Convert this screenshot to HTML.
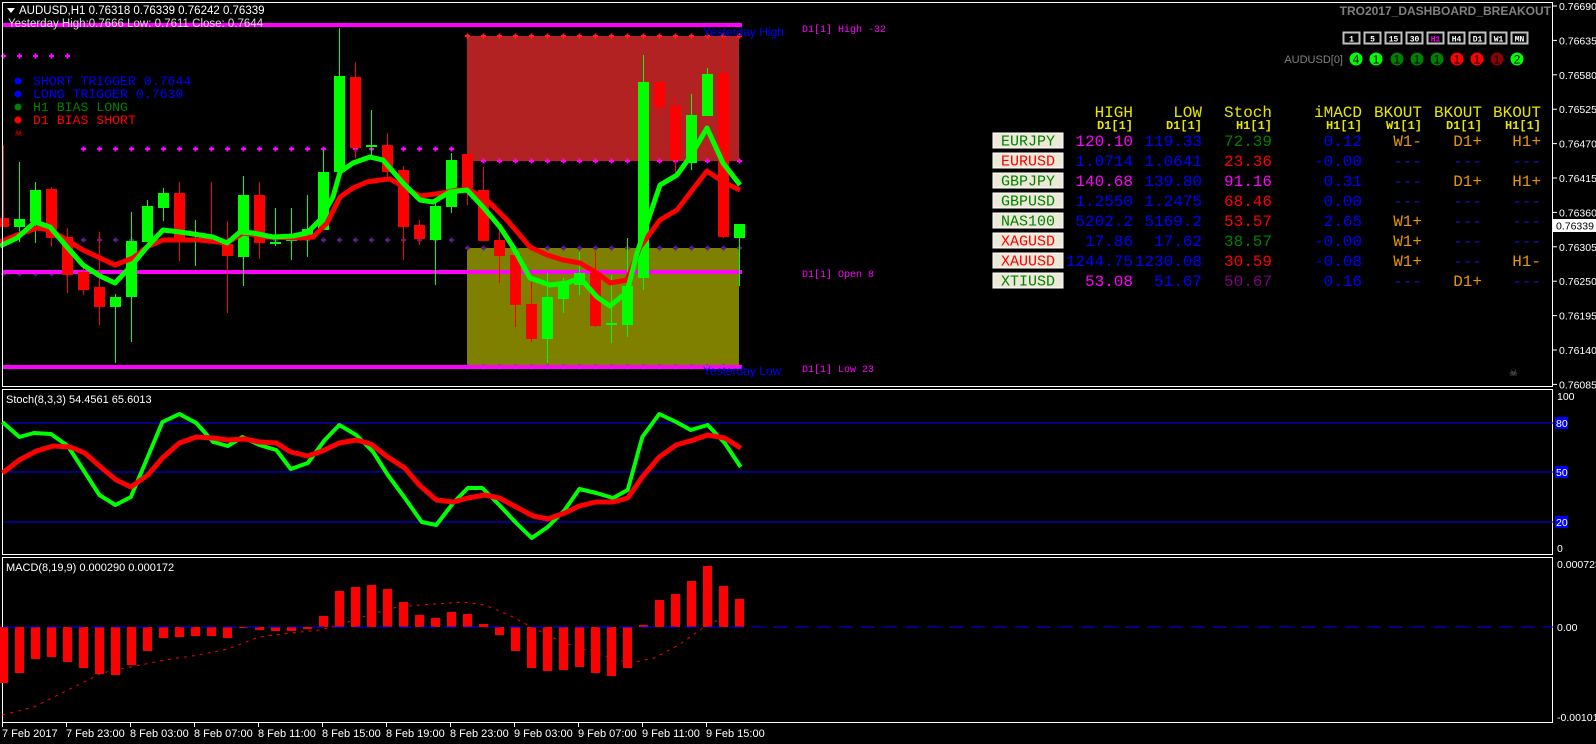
<!DOCTYPE html>
<html><head><meta charset="utf-8">
<style>
html,body{margin:0;padding:0;background:#000;width:1596px;height:744px;overflow:hidden}
svg{display:block}
.s{font-family:"Liberation Sans",sans-serif}
.m{font-family:"Liberation Mono",monospace}
</style></head>
<body>
<svg id="c" width="1596" height="744" viewBox="0 0 1596 744" xmlns="http://www.w3.org/2000/svg">
<rect width="1596" height="744" fill="#000"/>
<!-- boxes -->
<rect x="467" y="36" width="272" height="125" fill="#b22222"/>
<rect x="467" y="248" width="272" height="119" fill="#808000"/>
<g id="dots"></g>
<!-- magenta lines -->
<rect x="2" y="23" width="740" height="4" fill="#ff00ff"/>
<rect x="2" y="270" width="740" height="4" fill="#ff00ff"/>
<rect x="2" y="365" width="740" height="4" fill="#ff00ff"/>
<g id="cand"></g>
<g id="ma"></g>
<!-- panel borders -->
<rect x="2.5" y="2.5" width="1550" height="384" fill="none" stroke="#fff"/>
<rect x="2.5" y="389.5" width="1550" height="165" fill="none" stroke="#fff"/>
<rect x="2.5" y="557.5" width="1550" height="165" fill="none" stroke="#fff"/>
<!-- header text -->
<polygon points="7,8 15,8 11,13" fill="#fff"/>
<text x="19" y="14" class="s" font-size="11.5" fill="#fff">AUDUSD,H1  0.76318 0.76339 0.76242 0.76339</text>
<text x="8" y="27" class="s" font-size="11.5" fill="#ddd">Yesterday High:0.7666   Low: 0.7611   Close: 0.7644</text>
<!-- legend -->
<circle cx="18" cy="81" r="3.5" fill="#0000ff"/><circle cx="18" cy="94" r="3.5" fill="#0000ff"/>
<circle cx="18" cy="107" r="3.5" fill="#008000"/><circle cx="18" cy="120" r="3.5" fill="#ff0000"/>
<g class="m" font-size="13.2">
<text x="33" y="85" fill="#0000ff">SHORT TRIGGER 0.7644</text>
<text x="33" y="98" fill="#0000ff">LONG TRIGGER  0.7630</text>
<text x="33" y="111" fill="#008000">H1 BIAS LONG</text>
<text x="33" y="124" fill="#ff0000">D1 BIAS SHORT</text>
</g>
<text x="14" y="136" font-size="10" fill="#f00" class="s">☠</text>
<!-- chart labels -->
<text x="703" y="36" class="s" font-size="12" fill="#0000ff">Yesterday High</text>
<text x="703" y="375" class="s" font-size="12" fill="#0000ff">Yesterday Low</text>
<g class="m" font-size="10" fill="#ff00ff">
<text x="802" y="32">D1[1] High  -32</text>
<text x="802" y="277">D1[1] Open 8</text>
<text x="802" y="372">D1[1] Low  23</text>
</g>
<!-- top right -->
<text x="1551" y="15" text-anchor="end" class="s" font-size="12" font-weight="bold" fill="#808080">TRO2017_DASHBOARD_BREAKOUT</text>
<g id="tf"></g>
<text x="1343" y="63" text-anchor="end" class="s" font-size="11" fill="#808080">AUDUSD[0]</text>
<!-- table -->
<g class="m" font-size="16" text-anchor="end" fill="#e6e600">
<text x="1133" y="117">HIGH</text><text x="1202" y="117">LOW</text><text x="1272" y="117">Stoch</text>
<text x="1362" y="117">iMACD</text><text x="1422" y="117">BKOUT</text><text x="1482" y="117">BKOUT</text><text x="1541" y="117">BKOUT</text>
</g>
<g class="m" font-size="12" font-weight="bold" text-anchor="end" fill="#e6e600">
<text x="1133" y="129">D1[1]</text><text x="1202" y="129">D1[1]</text><text x="1272" y="129">H1[1]</text>
<text x="1362" y="129">H1[1]</text><text x="1422" y="129">W1[1]</text><text x="1482" y="129">D1[1]</text><text x="1541" y="129">H1[1]</text>
</g>
<g id="tbl"></g>
<!-- right axis -->
<g id="ax" class="s" font-size="10.5" fill="#fff"></g>
<rect x="1553" y="219" width="43" height="13" fill="#fff"/>
<text x="1556" y="229.5" class="s" font-size="10.5" fill="#000">0.76339</text>
<text x="1509" y="376" class="s" font-size="10" fill="#777">☠</text>
<!-- stoch -->
<text x="6" y="403" class="s" font-size="11" fill="#fff">Stoch(8,3,3) 54.4561 65.6013</text>
<line x1="3" y1="423" x2="1553" y2="423" stroke="#0000ff"/>
<line x1="3" y1="472" x2="1553" y2="472" stroke="#0000ff"/>
<line x1="3" y1="522" x2="1553" y2="522" stroke="#0000ff"/>
<g class="s" font-size="10.5" fill="#fff">
<text x="1557" y="400">100</text>
<rect x="1555" y="417" width="13" height="12" fill="#0000ff"/><text x="1556" y="427">80</text>
<rect x="1555" y="466" width="13" height="12" fill="#0000ff"/><text x="1556" y="476">50</text>
<rect x="1555" y="516" width="13" height="12" fill="#0000ff"/><text x="1556" y="526">20</text>
<text x="1557" y="552">0</text>
<text x="1557" y="568">0.000723</text>
<text x="1557" y="631">0.00</text>
<text x="1557" y="721">-0.001019</text>
</g>
<g id="st"></g>
<!-- macd -->
<text x="6" y="571" class="s" font-size="11" fill="#fff">MACD(8,19,9) 0.000290 0.000172</text>
<g id="mc"></g>
<line x1="3" y1="627" x2="1553" y2="627" stroke="#0000ff" stroke-dasharray="14,8"/>
<!-- time axis -->
<g class="s" font-size="11" fill="#fff">
<text x="2" y="737">7 Feb 2017</text><text x="66" y="737">7 Feb 23:00</text><text x="130" y="737">8 Feb 03:00</text>
<text x="194" y="737">8 Feb 07:00</text><text x="258" y="737">8 Feb 11:00</text><text x="322" y="737">8 Feb 15:00</text>
<text x="386" y="737">8 Feb 19:00</text><text x="450" y="737">8 Feb 23:00</text><text x="514" y="737">9 Feb 03:00</text>
<text x="578" y="737">9 Feb 07:00</text><text x="642" y="737">9 Feb 11:00</text><text x="706" y="737">9 Feb 15:00</text>
</g>
<g id="tk"></g>
</svg>
<script>
var NS="http://www.w3.org/2000/svg";
function el(p,t,a,txt){var e=document.createElementNS(NS,t);for(var k in a)e.setAttribute(k,a[k]);if(txt!==undefined)e.textContent=txt;document.getElementById(p).appendChild(e);return e;}
// candles: [color, bodyTop, bodyBot, wickTop, wickBot]
var C=[["r",218,227,145,227],["g",219,227,162,242],["g",190,222,182,243],["r",189,238,187,247],["r",237,275,228,293],
["r",272,290,267,295],["r",287,307,232,325],["g",297,307,294,363],["g",241,297,212,342],["g",206,242,200,242],
["g",193,208,188,221],["r",193,238,182,261],["g",238,240,220,266],["r",239,241,182,241],["r",244,256,221,313],
["g",195,257,176,286],["r",195,243,182,259],["g",242,244,208,246],["g",239,241,208,260],["g",229,238,195,257],
["g",172,230,150,230],["g",76,172,28,172],["r",77,148,62,158],["g",145,147,110,160],["r",145,172,133,177],
["r",170,227,166,260],["r",225,239,220,245],["g",206,240,200,285],["g",160,207,153,213],["r",154,188,154,205],
["r",190,241,167,241],["r",240,256,227,283],["r",255,305,255,327],["r",304,339,282,342],["g",297,339,273,363],
["g",283,299,278,313],["g",273,285,252,295],["r",273,326,252,327],["g",323,325,275,343],["g",286,325,238,337],
["g",82,278,55,290],["r",82,107,82,115],["r",106,160,95,176],["g",115,163,94,170],["g",74,116,68,116],
["r",73,237,33,238],["g",224,238,224,286]];
C.forEach(function(c,i){var x=3.5+16*i,col=c[0]=="g"?"#00ff00":"#ff0000";
el("cand","line",{x1:x,y1:c[3],x2:x,y2:c[4],stroke:col,"stroke-width":1});
var h=Math.max(c[2]-c[1],2);el("cand","rect",{x:x-5.5,y:c[1],width:11,height:h,fill:col});});
// dots
function dots(y,x0,x1,col){for(var x=x0;x<=x1;x+=16){el("dots","path",{d:"M"+(x-2.5)+" "+y+"h5M"+x+" "+(y-2.5)+"v5",stroke:col,"stroke-width":2});}}
dots(56,3.5,67.5,"#ff00ff");dots(149,83.5,451.5,"#ff00ff");dots(161,467.5,739.5,"#ff00ff");dots(36,467.5,739.5,"#ff2020");
dots(240,83.5,451.5,"#5b1c8c");dots(274,3.5,67.5,"#5b1c8c");dots(248,467.5,739.5,"#5b1c8c");dots(367,467.5,739.5,"#2020ff");
function pl(g,pts,col,w,extra){var d=pts.map(function(p,i){return (i?"L":"M")+p[0]+" "+p[1]}).join("");var a={d:d,fill:"none",stroke:col,"stroke-width":w,"stroke-linejoin":"round"};for(var k in extra)a[k]=extra[k];el(g,"path",a);}
// MAs
var red=[[0,242],[17,235],[37,228],[50,230],[67,240],[83,250],[100,258],[115,265],[133,258],[147,247],[163,240],[200,240],[227,243],[243,233],[267,237],[300,238],[313,237],[327,223],[340,197],[353,188],[367,182],[380,180],[390,179],[420,196],[443,193],[457,190],[470,190],[490,203],[507,220],[530,247],[547,255],[563,260],[580,263],[597,273],[610,283],[627,280],[640,247],[660,220],[677,210],[690,193],[707,171],[723,182],[740,190]];
var grn=[[0,246],[17,238],[35,222],[50,227],[67,247],[83,265],[100,276],[115,283],[132,265],[147,247],[163,230],[180,232],[200,235],[213,237],[227,243],[240,232],[253,233],[273,237],[293,236],[307,233],[320,220],[333,197],[340,172],[353,163],[370,157],[383,160],[403,183],[420,200],[433,202],[450,192],[467,190],[483,207],[500,227],[513,247],[530,278],[550,285],[567,283],[580,278],[597,297],[610,306],[627,292],[637,253],[660,185],[677,175],[690,157],[707,128],[723,163],[740,185]];
pl("ma",red,"#ff0000",5);pl("ma",grn,"#00ff00",5);
// stoch
var sx=2.063;
var sg=[[5,422],[40,437],[70,433],[105,434],[140,446],[205,495],[238,505],[270,497],[335,422],[370,414],[405,423],[440,442],[470,446],[500,437],[535,445],[570,450],[600,469],[635,463],[670,440],[700,425],[735,435],[770,452],[800,475],[835,498],[870,522],[900,525],[935,503],[965,488],[995,488],[1030,505],[1065,523],[1097,538],[1130,527],[1165,510],[1195,489],[1230,493],[1265,498],[1295,490],[1325,437],[1360,414],[1395,422],[1425,430],[1460,425],[1495,443],[1528,467]].map(function(p){return[(p[0]/sx).toFixed(1),p[1]]});
var sr=[[5,473],[40,460],[75,451],[110,446],[145,447],[175,453],[210,468],[240,480],[270,487],[305,475],[335,458],[370,443],[405,437],[440,438],[470,440],[505,439],[535,442],[570,443],[600,452],[635,456],[665,451],[700,443],[735,440],[765,444],[800,457],[835,468],[865,485],[900,500],[935,502],[965,498],[1000,495],[1030,498],[1065,507],[1100,516],[1130,519],[1165,513],[1195,506],[1230,502],[1265,502],[1295,498],[1325,477],[1360,457],[1395,445],[1430,440],[1460,435],[1495,438],[1528,448]].map(function(p){return[(p[0]/sx).toFixed(1),p[1]]});
pl("st",sg,"#00ff00",4);pl("st",sr,"#ff0000",5);
// macd
var M=[683,673,659,657,662,668,674,675,665,651,638,637,636,636,638,628,630,631,631,629,616,591,587,585,589,602,615,618,612,614,624,635,651,668,671,670,667,673,676,668,625,600,594,581,566,586,599];
M.forEach(function(y,i){var x=3.5+16*i;var t=Math.min(y,627),b=Math.max(y,627);el("mc","rect",{x:x-4.5,y:t,width:9,height:Math.max(b-t,1),fill:"#ff0000"});});
var sig=[[5,715],[70,707],[140,690],[210,673],[270,667],[340,660],[410,655],[470,649],[535,637],[600,633],[660,630],[700,625],[760,615],[820,607],[870,605],[955,602],[1000,605],[1050,615],[1100,628],[1160,642],[1220,652],[1260,658],[1300,663],[1350,658],[1400,645],[1450,628],[1500,615]].map(function(p){return[(p[0]/sx).toFixed(1),p[1]]});
pl("mc",sig,"#ff0000",1,{"stroke-dasharray":"3,5"});
// time ticks
for(var i=0;i<12;i++){var x=2.5+64*i;el("tk","line",{x1:x,y1:722,x2:x,y2:727,stroke:"#fff"});}
// right axis
var P=["0.76690","0.76635","0.76580","0.76525","0.76470","0.76415","0.76360","0.76305","0.76250","0.76195","0.76140","0.76085"];
P.forEach(function(p,i){var y=6+34.4*i;el("ax","line",{x1:1553,y1:y,x2:1557,y2:y,stroke:"#fff"});el("ax","text",{x:1559,y:y+4},p);});
// timeframe buttons
var TF=["1","5","15","30","H1","H4","D1","W1","MN"],TX=[1343,1364,1385,1406,1427,1448,1469,1490,1511];
TF.forEach(function(t,i){el("tf","rect",{x:TX[i]+0.5,y:32.5,width:16,height:11,fill:"#000",stroke:"#c0c0c0","stroke-width":2});
el("tf","text",{x:TX[i]+8.5,y:41.5,"text-anchor":"middle","font-size":"8","font-weight":"bold","font-family":"Liberation Mono,monospace",fill:t=="H1"?"#ff00ff":"#fff"},t);});
var CC=["#00ff00","#00ff00","#008000","#008000","#008000","#ff0000","#ff0000","#8b0000","#00ff00"],CN=["4","1","1","1","1","1","1","1","2"],CX=[1356,1376,1397,1417,1437,1457,1477,1497,1517];
CX.forEach(function(x,i){el("tf","circle",{cx:x,cy:59,r:6.5,fill:CC[i]});el("tf","text",{x:x,y:63.5,"text-anchor":"middle","font-size":"12","font-family":"Liberation Sans,sans-serif",fill:"#000"},CN[i]);});
// table
var B="#0000ff",O="#e69500",D="#1010c0",MG="#ff00ff",R="#ff0000",G="#008000";
var rows=[["EURJPY",G,"120.10",MG,"119.33",B,"72.39",G,"0.12",B,"W1-",O,"D1+",O,"H1+",O],
["EURUSD",R,"1.0714",B,"1.0641",B,"23.36",R,"-0.00",B,"---",D,"---",D,"---",D],
["GBPJPY",G,"140.68",MG,"139.80",B,"91.16",MG,"0.31",B,"---",D,"D1+",O,"H1+",O],
["GBPUSD",G,"1.2550",B,"1.2475",B,"68.46",R,"0.00",B,"---",D,"---",D,"---",D],
["NAS100",G,"5202.2",B,"5169.2",B,"53.57",R,"2.65",B,"W1+",O,"---",D,"---",D],
["XAGUSD",R,"17.86",B,"17.62",B,"38.57",G,"-0.00",B,"W1+",O,"---",D,"---",D],
["XAUUSD",R,"1244.75",B,"1230.08",B,"30.59",R,"-0.08",B,"W1+",O,"---",D,"H1-",O],
["XTIUSD",G,"53.08",MG,"51.67",B,"50.67","#800080","0.16",B,"---",D,"D1+",O,"---",D]];
var XS=[1133,1202,1272,1362,1422,1482,1541];
rows.forEach(function(r,i){var y=133+20*i;
el("tbl","rect",{x:993,y:y,width:70,height:15,fill:"#ece9d8",stroke:"#fff"});
el("tbl","text",{x:1028,y:y+12.5,"text-anchor":"middle","font-size":"15","font-family":"Liberation Mono,monospace",fill:r[1]},r[0]);
for(var j=0;j<7;j++){el("tbl","text",{x:XS[j],y:y+13,"text-anchor":"end","font-size":"16","font-family":"Liberation Mono,monospace",fill:r[3+2*j]},r[2+2*j]);}});
</script>
</body></html>
